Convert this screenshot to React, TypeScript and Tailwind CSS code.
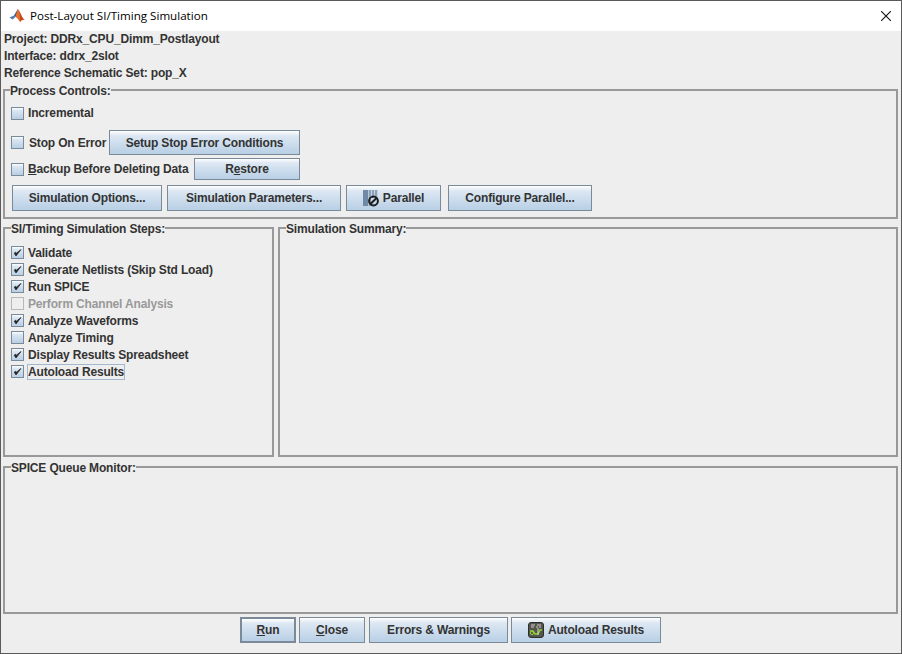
import type { ReactNode } from "react";

function MatlabIcon() {
  return (
    <svg width="16" height="16" viewBox="0 0 16 16">
      <path d="M0.5 9.5 L5 7.5 L6.5 9 L3.5 11.5 Z" fill="#4a7fb5" />
      <path d="M5 7.5 L8.5 1.5 L10 2 L6.5 9 Z" fill="#2f5f8f" />
      <path d="M8.5 1.5 C10 1 11 4 12 6.5 C13 9 14 11 15.5 12 C13.5 11.5 12.5 12 11 14 C9.5 11.5 8 10 6.5 9 Z" fill="#e8722c" />
      <path d="M9.5 2.5 C10.5 4 11 7 11 14 C12.5 12 13.5 11.5 15.5 12 C13 10 12 6 9.5 2.5 Z" fill="#c2461f" />
    </svg>
  );
}

function ParallelIcon() {
  return (
    <svg width="16" height="17" viewBox="0 0 16 17">
      <rect x="0" y="0" width="5" height="16" fill="#6f8aa6" />
      <rect x="5" y="0" width="1" height="16" fill="#b4c6d8" />
      <rect x="6" y="0" width="2" height="16" fill="#8aa1b8" />
      <rect x="8" y="0" width="1" height="8" fill="#c4d3e2" />
      <rect x="9" y="0" width="2" height="8" fill="#8aa1b8" />
      <rect x="11" y="0" width="1" height="8" fill="#c4d3e2" />
      <rect x="12" y="0" width="2" height="8" fill="#8aa1b8" />
      <rect x="14" y="0" width="1" height="8" fill="#c4d3e2" />
      <circle cx="10.5" cy="11" r="4.4" fill="none" stroke="#1c1c1c" strokeWidth="2" />
      <path d="M7.4 14 L13.6 8" stroke="#1c1c1c" strokeWidth="2" />
    </svg>
  );
}

function AutoloadIcon() {
  return (
    <svg width="16" height="16" viewBox="0 0 16 16">
      <rect x="0.5" y="0.5" width="15" height="15" rx="2.5" fill="#55554f" stroke="#2e2e2c" />
      <path d="M3 3 H7 M9 3 H13 M3 5 H6 M8 5 H10 M11 5 H13" stroke="#d0d0c6" strokeWidth="1" />
      <path d="M2 9 H5 L7 12 H10 L12 8 H14" fill="none" stroke="#8fd12e" strokeWidth="1.5" />
      <circle cx="4" cy="11" r="1.6" fill="none" stroke="#8fd12e" />
      <path d="M10 6 V13" stroke="#d8d8d0" strokeWidth="1" />
    </svg>
  );
}

function Check() {
  return (
    <svg width="9" height="9" viewBox="0 0 9 9" className="block">
      <path d="M1.2 5.2 L3 8 L8 1.5 L3.4 5.2 L2.6 4.2 Z" fill="#222222" stroke="#222222" strokeWidth="0.7" />
    </svg>
  );
}

function Box({ checked, disabled }: { checked?: boolean; disabled?: boolean }) {
  return (
    <span
      className={
        disabled
          ? "w-[13px] h-[13px] shrink-0 border border-[#b8b8b8] bg-[#eeeeee]"
          : "w-[13px] h-[13px] shrink-0 border border-[#7a8a99] bg-linear-to-b from-white via-[#dde8f3] via-20% to-[#b8cfe5] flex items-center justify-center"
      }
    >
      {checked && <Check />}
    </span>
  );
}

function Btn({
  children,
  className = "",
  main,
}: {
  children: ReactNode;
  className?: string;
  main?: boolean;
}) {
  return (
    <button
      className={`${main ? "border-2" : "border"} border-[#7a8a99] bg-linear-to-b from-white via-[#dde8f3] via-20% to-[#b8cfe5] flex items-center justify-center gap-[4px] font-bold text-[12px] tracking-[-0.16px] text-[#333333] ${className}`}
    >
      {children}
    </button>
  );
}

function Panel({
  title,
  children,
  className = "",
  legendClass = "ml-[6px]",
}: {
  title: string;
  children?: ReactNode;
  className?: string;
  legendClass?: string;
}) {
  return (
    <fieldset className={`border-2 border-[#999999] min-w-0 ${className}`}>
      <legend className={`${legendClass} h-[15px] leading-[18px] font-bold text-[12px] tracking-[-0.16px] text-[#333333]`}>
        {title}
      </legend>
      {children}
    </fieldset>
  );
}

const steps = [
  { label: "Validate", checked: true },
  { label: "Generate Netlists (Skip Std Load)", checked: true },
  { label: "Run SPICE", checked: true },
  { label: "Perform Channel Analysis", disabled: true },
  { label: "Analyze Waveforms", checked: true },
  { label: "Analyze Timing" },
  { label: "Display Results Spreadsheet", checked: true },
  { label: "Autoload Results", checked: true, focused: true },
];

export default function App() {
  return (
    <div className="w-[902px] h-[654px] border border-[#5a5a5a] bg-[#eeeeee] font-['Liberation_Sans',Arial,sans-serif] text-[#333333] flex flex-col overflow-hidden">
      <div className="h-[30px] shrink-0 bg-white flex items-center pl-[8px] pr-[9px]">
        <MatlabIcon />
        <span className="ml-[5px] text-[11.6px] text-black font-['Open_Sans',sans-serif]">
          Post-Layout SI/Timing Simulation
        </span>
        <svg width="10" height="10" viewBox="0 0 10 10" className="ml-auto mr-[1px] mb-[1px]">
          <path d="M0 0 L10 10 M10 0 L0 10" stroke="#111111" strokeWidth="1.1" />
        </svg>
      </div>

      <div className="flex-1 flex flex-col pl-[2px] pr-[3px]">
        <div className="text-[12px] tracking-[-0.16px] font-bold leading-[17px] pl-px">
          <p>Project: DDRx_CPU_Dimm_Postlayout</p>
          <p>Interface: ddrx_2slot</p>
          <p>Reference Schematic Set: pop_X</p>
        </div>

        <Panel title="Process Controls:" legendClass="ml-[5px]" className="h-[137px] shrink-0">
          <div className="pl-[6px] text-[12px] tracking-[-0.16px] font-bold">
            <div className="mt-[8px] h-[16px] flex items-center gap-[4px]">
              <Box />
              <span>Incremental</span>
            </div>
            <div className="mt-[9px] h-[25px] flex items-center">
              <Box />
              <span className="ml-[5px] w-[80px]">Stop On Error</span>
              <Btn className="w-[191px] h-[25px]">Setup Stop Error Conditions</Btn>
            </div>
            <div className="mt-[3px] h-[22px] flex items-center">
              <Box />
              <span className="ml-[4px] w-[166px]">
                <u>B</u>ackup Before Deleting Data
              </span>
              <Btn className="w-[106px] h-[22px]">
                <span>
                  R<u>e</u>store
                </span>
              </Btn>
            </div>
            <div className="mt-[5px] ml-px flex items-center">
              <Btn className="w-[150px] h-[26px]">Simulation Options...</Btn>
              <Btn className="ml-[5px] w-[174px] h-[26px]">Simulation Parameters...</Btn>
              <Btn className="ml-[5px] w-[95px] h-[26px]">
                <ParallelIcon />
                Parallel
              </Btn>
              <Btn className="ml-[7px] w-[144px] h-[26px]">Configure Parallel...</Btn>
            </div>
          </div>
        </Panel>

        <div className="mt-[1px] h-[237px] shrink-0 grid grid-cols-[271px_1fr] gap-[4px]">
          <Panel title="SI/Timing Simulation Steps:">
            <div className="pt-[9px] pl-[6px] text-[12px] tracking-[-0.16px] font-bold">
              {steps.map((s) => (
                <div key={s.label} className="h-[17px] flex items-center gap-[4px]">
                  <Box checked={s.checked} disabled={s.disabled} />
                  <span
                    className={
                      s.focused
                        ? "border border-[#a3b8cc] leading-[14px] -ml-px -mb-[1px]"
                        : s.disabled
                          ? "text-[#999999]"
                          : ""
                    }
                  >
                    {s.label}
                  </span>
                </div>
              ))}
            </div>
          </Panel>
          <Panel title="Simulation Summary:" />
        </div>

        <Panel title="SPICE Queue Monitor:" className="mt-[2px] h-[155px] shrink-0" />

        <div className="mt-[3px] flex justify-center gap-[3px]">
          <Btn main className="w-[56px] h-[26px]">
            <span>
              <u>R</u>un
            </span>
          </Btn>
          <Btn className="w-[66px] h-[26px]">
            <span>
              <u>C</u>lose
            </span>
          </Btn>
          <Btn className="ml-px w-[139px] h-[26px]">Errors &amp; Warnings</Btn>
          <Btn className="w-[150px] h-[26px]">
            <AutoloadIcon />
            Autoload Results
          </Btn>
        </div>
      </div>
    </div>
  );
}
